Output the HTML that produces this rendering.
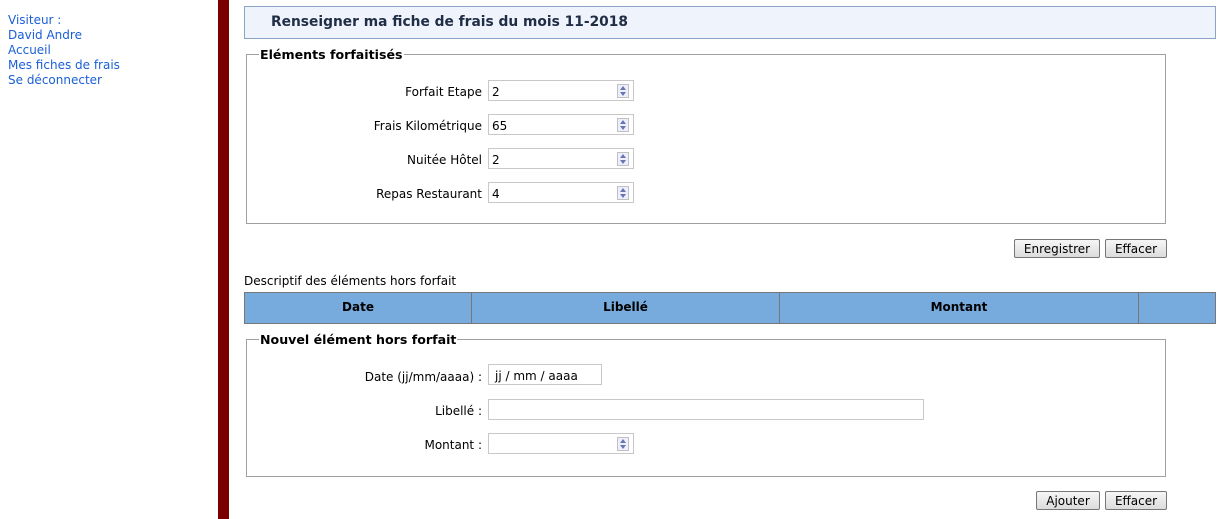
<!DOCTYPE html>
<html><head><meta charset="utf-8"><style>
*{margin:0;padding:0;box-sizing:border-box}
body{width:1221px;height:519px;position:relative;background:#fff;font-family:"DejaVu Sans","Liberation Sans",sans-serif;font-size:12px;color:#000;overflow:hidden}
.a{position:absolute}
.side{left:8px;top:13px;color:#1a5fd6;line-height:15px;font-size:12px}
.bar{left:218px;top:0;width:11px;height:519px;background:#7a0000}
.hdr{left:244px;top:6px;width:972px;height:33px;background:#eef3fc;border:1px solid #8aa4c8;font-weight:bold;font-size:13.8px;color:#1f2d45;padding:7px 0 0 26px}
.fs{border:1px solid #a0a0a0}
.lg{background:#fff;font-weight:bold;font-size:12.6px;padding:0 1px}
.lbl{text-align:right;width:300px;font-size:12px}
.in{border:1px solid #c8c8c8;height:21px;background:#fff;font-size:12px;padding:4px 0 0 3px}
.sp{position:absolute;right:4px;top:3px;width:12px;height:14px;border:1px solid #c0c0c0;background:#eef}
.sp:before{content:"";position:absolute;left:2px;top:1px;border-left:3px solid transparent;border-right:3px solid transparent;border-bottom:4px solid #6677aa}
.sp:after{content:"";position:absolute;left:2px;top:7px;border-left:3px solid transparent;border-right:3px solid transparent;border-top:4px solid #6677aa}
.btn{border:1px solid #777;border-radius:2px;background:linear-gradient(#f6f6f6,#dcdcdc);height:19px;text-align:center;font-size:12px;line-height:18px}
.tb{top:292px;height:32px;background:#77aadd;border:1px solid #777;font-weight:bold;text-align:center;line-height:29px}
</style></head><body>
<div class="a side">Visiteur :<br>David Andre<br>Accueil<br>Mes fiches de frais<br>Se déconnecter</div>
<div class="a bar"></div>
<div class="a hdr">Renseigner ma fiche de frais du mois 11-2018</div>

<div class="a fs" style="left:246px;top:54px;width:920px;height:170px"></div>
<div class="a lg" style="left:259px;top:47px">Eléments forfaitisés</div>
<div class="a lbl" style="left:182px;top:85px">Forfait Etape</div>
<div class="a in" style="left:488px;top:80px;width:146px">2<span class="sp"></span></div>
<div class="a lbl" style="left:182px;top:119px">Frais Kilométrique</div>
<div class="a in" style="left:488px;top:114px;width:146px">65<span class="sp"></span></div>
<div class="a lbl" style="left:182px;top:153px">Nuitée Hôtel</div>
<div class="a in" style="left:488px;top:148px;width:146px">2<span class="sp"></span></div>
<div class="a lbl" style="left:182px;top:187px">Repas Restaurant</div>
<div class="a in" style="left:488px;top:182px;width:146px">4<span class="sp"></span></div>
<div class="a btn" style="left:1014px;top:239px;width:86px">Enregistrer</div>
<div class="a btn" style="left:1105px;top:239px;width:62px">Effacer</div>

<div class="a" style="left:244px;top:274px">Descriptif des éléments hors forfait</div>
<div class="a tb" style="left:244px;width:228px">Date</div>
<div class="a tb" style="left:471px;width:309px">Libellé</div>
<div class="a tb" style="left:779px;width:360px">Montant</div>
<div class="a tb" style="left:1138px;width:78px"></div>

<div class="a fs" style="left:246px;top:339px;width:920px;height:138px"></div>
<div class="a lg" style="left:259px;top:332px">Nouvel élément hors forfait</div>
<div class="a lbl" style="left:182px;top:370px">Date (jj/mm/aaaa) :</div>
<div class="a in" style="left:488px;top:364px;width:114px;padding-left:6px">jj / mm / aaaa</div>
<div class="a lbl" style="left:182px;top:404px">Libellé :</div>
<div class="a in" style="left:488px;top:399px;width:436px"></div>
<div class="a lbl" style="left:182px;top:438px">Montant :</div>
<div class="a in" style="left:488px;top:433px;width:146px"><span class="sp"></span></div>
<div class="a btn" style="left:1036px;top:491px;width:64px">Ajouter</div>
<div class="a btn" style="left:1105px;top:491px;width:62px">Effacer</div>
</body></html>
